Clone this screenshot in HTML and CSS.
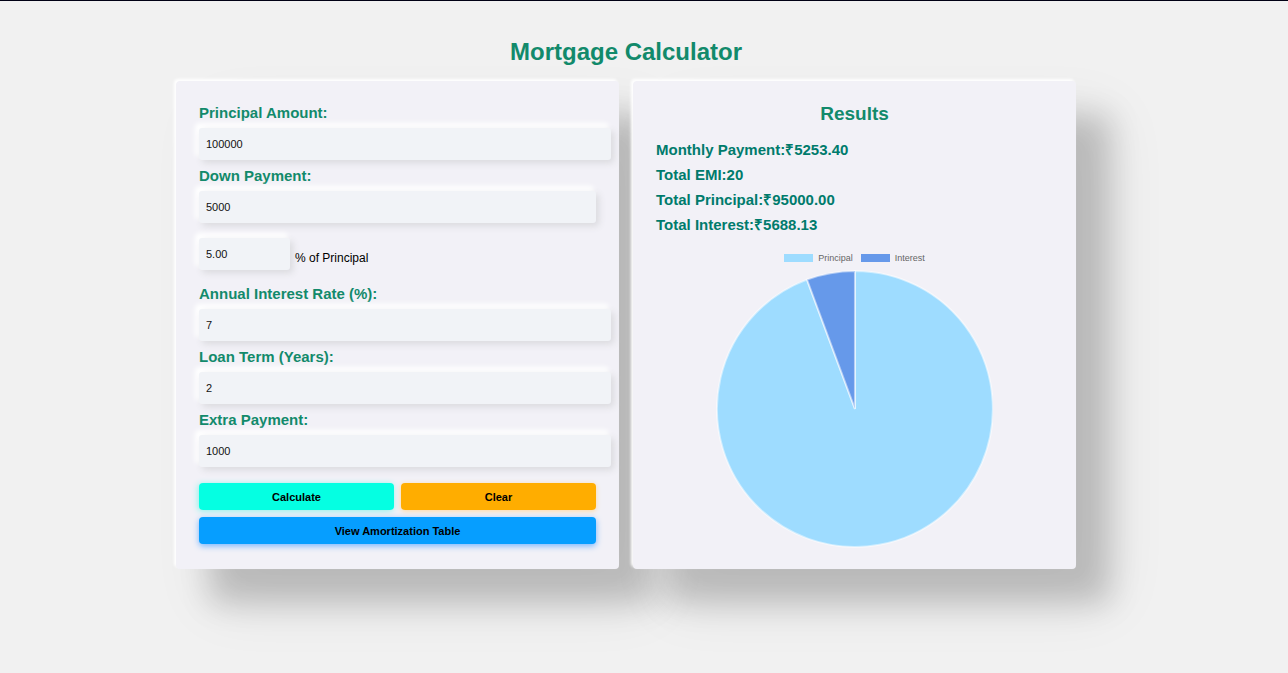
FILE: index.html
```html
<!DOCTYPE html>
<html lang="en">
<head>
<meta charset="utf-8">
<title>Mortgage Calculator</title>
<link rel="stylesheet" href="styles.css">
</head>
<body>
<main class="page">
  <h1 class="page-title">Mortgage Calculator</h1>
  <div class="panels">
    <form class="card form">
      <label class="label" for="principal">Principal Amount:</label>
      <input class="field wide" id="principal" type="text" value="100000">
      <label class="label" for="down">Down Payment:</label>
      <input class="field" id="down" type="text" value="5000">
      <div class="percent">
        <input class="field short" id="percent" type="text" value="5.00">
        <label for="percent">% of Principal</label>
      </div>
      <label class="label" for="rate">Annual Interest Rate (%):</label>
      <input class="field wide" id="rate" type="text" value="7">
      <label class="label" for="term">Loan Term (Years):</label>
      <input class="field wide" id="term" type="text" value="2">
      <label class="label" for="extra">Extra Payment:</label>
      <input class="field wide" id="extra" type="text" value="1000">
      <div class="actions">
        <button class="btn calculate" type="button">Calculate</button>
        <button class="btn clear" type="button">Clear</button>
        <button class="btn view" type="button">View Amortization Table</button>
      </div>
    </form>
    <section class="card results">
      <h2 class="results-title">Results</h2>
      <p class="result">Monthly Payment:₹5253.40</p>
      <p class="result">Total EMI:20</p>
      <p class="result">Total Principal:₹95000.00</p>
      <p class="result">Total Interest:₹5688.13</p>
      <div class="legend">
        <span class="key"><span class="swatch light"></span>Principal</span>
        <span class="key"><span class="swatch dark"></span>Interest</span>
      </div>
      <svg class="pie" viewBox="-139 -139 278 278" role="img" aria-label="Principal and interest shares">
        <g stroke="#fff" stroke-opacity=".5" stroke-width="2">
          <path fill="#9edcff" d="M0 0V-138A138 138 0 1 1 -48 -129.4Z"/>
          <path fill="#6699ea" d="M0 0L-48 -129.4A138 138 0 0 1 0 -138Z"/>
        </g>
      </svg>
    </section>
  </div>
</main>
</body>
</html>
```
FILE: styles.css
```css
* { box-sizing: border-box; }
body {
  margin: 0;
  min-height: 100vh;
  background: #f1f1f1;
  border-top: 1px solid #000014;
  font-family: "Liberation Sans", Arial, sans-serif;
  color: #000;
}
.page { padding: 36px 36px 40px 0; }
.page-title {
  margin: 0 0 14px;
  font-size: 24px;
  line-height: 30px;
  text-align: center;
  color: #128a6b;
}
.panels {
  display: grid;
  grid-template-columns: 1fr 1fr;
  gap: 14px;
  width: 72%;
  max-width: 900px;
  margin: 0 auto;
}
.card {
  background: #f2f1f7;
  border-radius: 4px;
  padding: 16px 23px 25px;
  box-shadow: -2px -2px 3px #fff, 34px 34px 30px rgba(0, 0, 0, .17), 34px 34px 60px rgba(0, 0, 0, .09);
}
.results { padding-bottom: 21px; }
.form { display: flex; flex-direction: column; }
.label {
  font-size: 15px;
  font-weight: bold;
  line-height: 31px;
  color: #128a6b;
}
.field {
  width: 100%;
  height: 32px;
  padding: 0 7px;
  border: 0;
  border-radius: 3px;
  background: #f1f3f7;
  font: 11px "Liberation Sans", Arial, sans-serif;
  color: #111;
  box-shadow: 3px 3px 7px #dadade, -3px -4px 5px 1px #fff;
}
.wide { width: calc(100% + 15px); }
.short { width: 91px; }
.percent {
  display: flex;
  align-items: center;
  gap: 5px;
  margin: 15px 0 8px;
  font-size: 12px;
}
.percent label { padding-top: 8px; }
.actions {
  display: grid;
  grid-template-columns: 1fr 1fr;
  gap: 7px;
  margin-top: 16px;
}
.btn {
  height: 27px;
  border: 0;
  border-radius: 4px;
  font: bold 11px "Liberation Sans", Arial, sans-serif;
  color: #000;
}
.calculate { background: #05ffe2; box-shadow: -1px 1px 6px #8cf3ec; }
.clear { background: #ffad00; box-shadow: 0 1px 5px #ffd9a0; }
.view { grid-column: 1 / -1; background: #069eff; box-shadow: 0 2px 6px #74b5ff; }
.results-title {
  margin: 5px 0 11px;
  font-size: 19px;
  line-height: 24px;
  text-align: center;
  color: #128a6b;
}
.result {
  margin: 0;
  font-size: 15px;
  font-weight: bold;
  line-height: 25px;
  color: #007b6c;
}
.legend {
  display: flex;
  justify-content: center;
  gap: 8px;
  margin: 14px 0 5px;
  font-size: 9px;
  line-height: 14px;
  color: #666;
}
.key { display: flex; align-items: center; gap: 5px; }
.swatch { width: 29px; height: 8px; }
.light { background: #9edcff; }
.dark { background: #6699ea; }
.pie { display: block; width: 70%; margin: 0 auto; }
```
